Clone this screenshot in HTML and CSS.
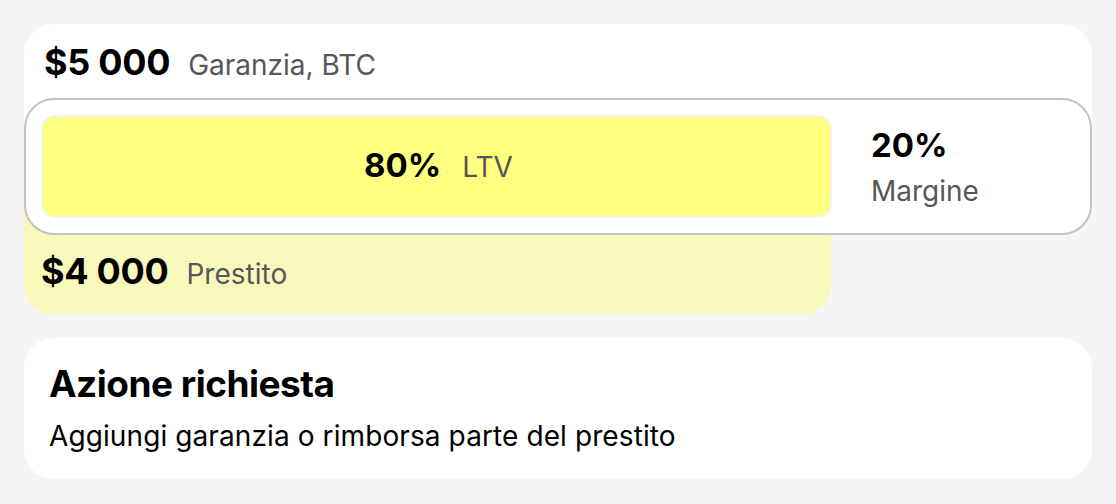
FILE: index.html
```html
<!DOCTYPE html>
<html lang="it">
<head>
<meta charset="utf-8">
<title>Posizione</title>
<link rel="stylesheet" href="styles.css">
</head>
<body>
<main class="page">
  <section class="position">
    <div class="collateral">
      <div class="amount-row">
        <span class="amount">$5 000</span>
        <span class="caption">Garanzia, BTC</span>
      </div>
    </div>
    <div class="ltv-box">
      <div class="ltv-bar">
        <span class="pct">80%</span>
        <span class="caption">LTV</span>
      </div>
      <div class="margin">
        <span class="pct">20%</span>
        <span class="caption">Margine</span>
      </div>
    </div>
    <div class="loan">
      <div class="amount-row">
        <span class="amount">$4 000</span>
        <span class="caption">Prestito</span>
      </div>
    </div>
  </section>
  <section class="action">
    <h2 class="action-title">Azione richiesta</h2>
    <p class="action-text">Aggiungi garanzia o rimborsa parte del prestito</p>
  </section>
</main>
</body>
</html>
```
FILE: styles.css
```css
* { box-sizing: border-box; }
html, body { margin: 0; padding: 0; }
body {
  background: #f5f5f5;
  font-family: Inter, "Noto Sans", "Liberation Sans", sans-serif;
  color: #000;
}
.page {
  padding: 24px 24px 0 24px;
  display: flex;
  flex-direction: column;
  gap: 24px;
}
.position {
  display: grid;
  grid-template-columns: 807px 1fr;
  grid-template-rows: 74px 107px 30px 79px;
}
.collateral {
  grid-column: 1 / -1;
  grid-row: 1 / 3;
  background: #fff;
  border-radius: 30px 30px 0 0;
  padding: 17px 20px 0;
}
.amount-row {
  display: flex;
  align-items: baseline;
  gap: 18px;
}
.amount {
  font-size: 36px;
  font-weight: 700;
  letter-spacing: -0.3px;
  line-height: 42px;
}
.caption {
  font-size: 28px;
  color: #575757;
  font-weight: 400;
}
.ltv-box {
  grid-column: 1 / -1;
  grid-row: 2 / 4;
  background: #fff;
  border: 2px solid #c3c3c3;
  border-radius: 30px;
  padding: 15px;
  display: grid;
  grid-template-columns: 791px 1fr;
  gap: 39px;
  position: relative;
  z-index: 1;
}
.ltv-bar {
  background: #ffff80;
  border: 2px solid #f3f3ef;
  border-radius: 14px;
  display: flex;
  align-items: baseline;
  justify-content: center;
  gap: 21px;
  padding-top: 28px;
  padding-left: 4px;
}
.pct {
  font-size: 33px;
  font-weight: 700;
  line-height: 40px;
}
.margin {
  display: flex;
  flex-direction: column;
  justify-content: center;
  gap: 9px;
  padding-bottom: 0;
}
.margin .caption { line-height: 34px; }
.loan {
  grid-column: 1;
  grid-row: 3 / 5;
  background: #f8f8bb;
  border-radius: 0 0 28px 28px;
  padding: 45px 17px 0;
}
.action {
  background: #fff;
  border-radius: 30px;
  padding: 25px 25px 25px;
  height: 141px;
}
.action-title {
  margin: 0;
  font-size: 37px;
  font-weight: 700;
  line-height: 42px;
  letter-spacing: -0.5px;
}
.action-text {
  margin: 14px 0 0;
  font-size: 28px;
  line-height: 34px;
  letter-spacing: 0.1px;
}
```
